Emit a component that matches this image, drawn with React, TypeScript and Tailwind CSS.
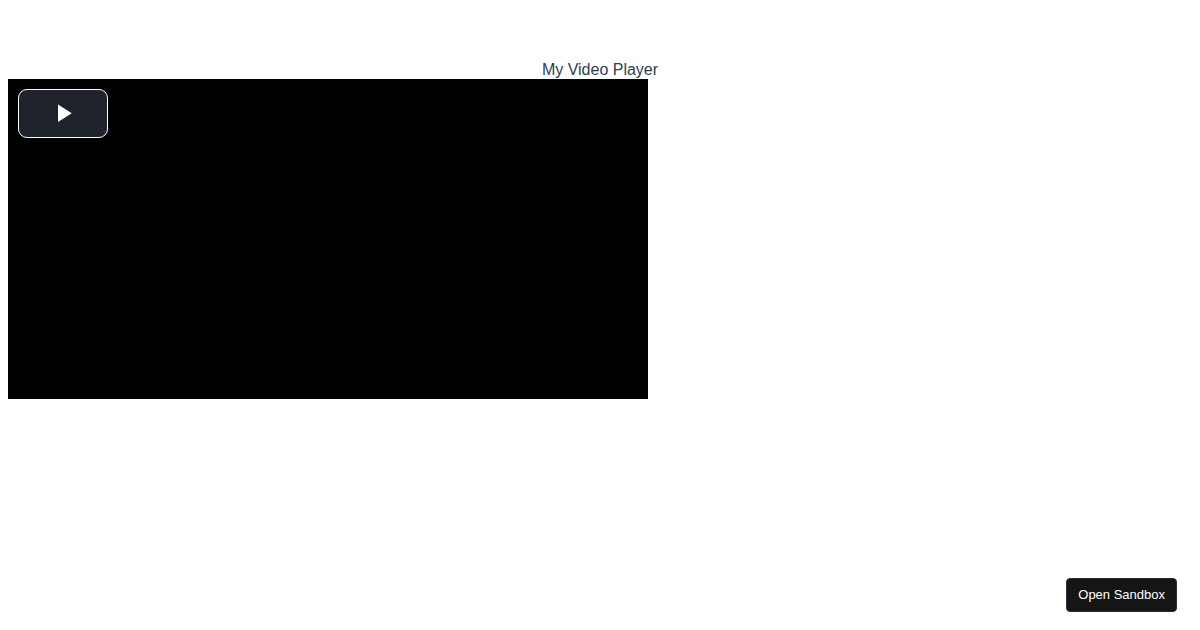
import React, { useState } from 'react';

const VideoPlayer = () => {
    const [playing, setPlaying] = useState(false);

    return (
        <div className="relative w-full max-w-[640px] aspect-[2/1] bg-black">
            <button
                type="button"
                title="Play Video"
                aria-pressed={playing}
                onClick={() => setPlaying(!playing)}
                className="absolute left-[10px] top-[10px] flex h-[49px] w-[90px] items-center justify-center rounded-[9px] border border-white bg-[#1f232c] text-white"
            >
                <svg viewBox="0 0 48 48" className="size-[30px]" fill="currentColor" aria-hidden="true">
                    <path d="M16 8.8v28l22-14z" />
                </svg>
            </button>
        </div>
    );
};

const App = () => {
    return (
        <div className="min-h-screen bg-white px-2 pt-[60px] font-['Liberation_Sans',Arial,sans-serif]">
            <h1 className="text-center text-[16px] leading-[19px] text-[#2c3e50]">My Video Player</h1>
            <VideoPlayer />
            <a
                href="#sandbox"
                className="fixed bottom-[18px] right-[23px] flex h-[34px] items-center rounded-[4px] border border-[#26303a] bg-[#151515] px-[11px] text-[13px] text-white"
            >
                Open Sandbox
            </a>
        </div>
    );
};

export default App;
